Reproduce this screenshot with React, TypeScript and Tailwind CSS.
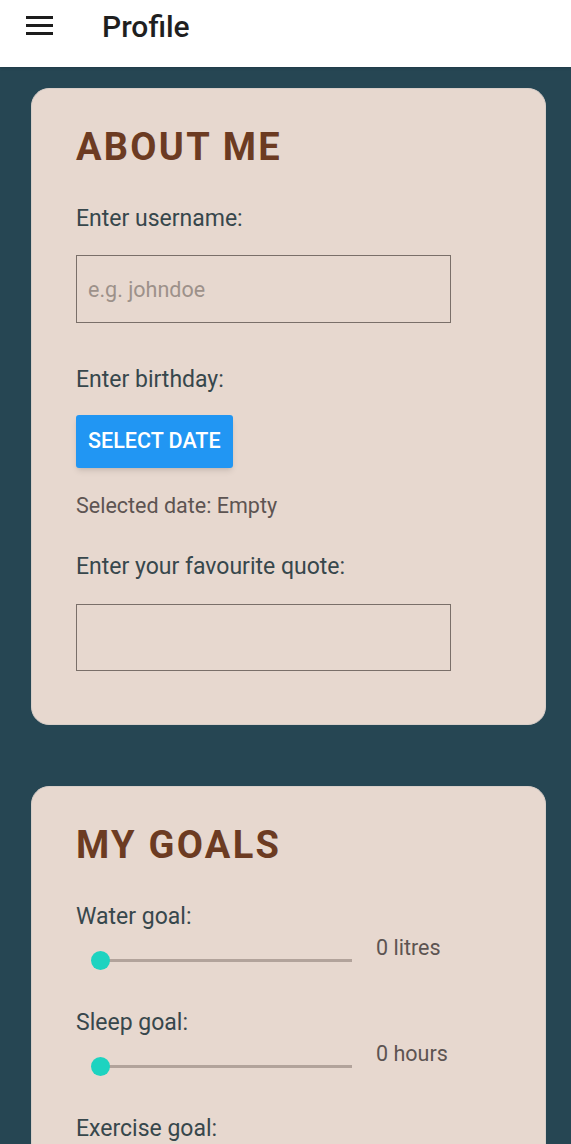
import { useState } from "react";

const GoalSlider = ({ value, unit }: { value: number; unit: string }) => {
  return (
    <div className="flex items-start h-[46px]">
      <div className="relative w-[290px] h-[46px] shrink-0">
        <div className="absolute left-[24px] w-[252px] top-[28px] h-[3px] bg-[#b2a39b]" />
        <div className="absolute left-[15px] top-[20px] w-[19px] h-[19px] rounded-full bg-[#1dd3c0]" />
      </div>
      <span className="ml-[10px] mt-[4px] text-[21.5px] leading-[26px] text-[#5d5452]">
        {value} {unit}
      </span>
    </div>
  );
};

export default function App() {
  const [username, setUsername] = useState("");
  const [quote, setQuote] = useState("");

  return (
    <div className="min-h-screen bg-[#264653] font-['Roboto',sans-serif]">
      <header className="h-[67px] bg-white flex items-start shadow-sm">
        <div className="ml-[26px] mt-[16px] flex flex-col gap-[5px]">
          <span className="block w-[27px] h-[3px] bg-[#1c1c1c]" />
          <span className="block w-[27px] h-[3px] bg-[#1c1c1c]" />
          <span className="block w-[27px] h-[3px] bg-[#1c1c1c]" />
        </div>
        <h1 className="ml-[49px] mt-[9px] text-[30px] leading-[36px] font-medium text-[#1f1f1f]">
          Profile
        </h1>
      </header>

      <main className="pl-[31px] pr-[25px] pt-[21px] flex flex-col gap-[61px]">
        <section className="bg-[#e7d8cf] rounded-[18px] border border-[#d8cec8] px-[44px] pt-[34px] pb-[53px]">
          <h2 className="text-[38px] font-bold tracking-[0.06em] text-[#6c3b22] leading-[48px]">
            ABOUT ME
          </h2>
          <label className="block mt-[34px] text-[23px] leading-[28px] text-[#37474c]">
            Enter username:
          </label>
          <input
            value={username}
            onChange={(e) => setUsername(e.target.value)}
            placeholder="e.g. johndoe"
            className="block mt-[22px] w-[375px] h-[68px] border-[1.5px] border-[#7a6f69] bg-transparent px-[11px] text-[21.5px] text-[#37474c] placeholder:text-[#9d918a] outline-none"
          />
          <label className="block mt-[43px] text-[23px] leading-[28px] text-[#37474c]">
            Enter birthday:
          </label>
          <button className="block mt-[21px] h-[53px] px-[12px] rounded-[3px] bg-[#2196f3] text-white text-[21.5px] font-medium shadow-md">
            SELECT DATE
          </button>
          <p className="mt-[25px] text-[21.5px] leading-[26px] text-[#5d5452]">Selected date: Empty</p>
          <label className="block mt-[34px] text-[23px] leading-[28px] text-[#37474c]">
            Enter your favourite quote:
          </label>
          <input
            value={quote}
            onChange={(e) => setQuote(e.target.value)}
            className="block mt-[23px] w-[375px] h-[67px] border-[1.5px] border-[#7a6f69] bg-transparent px-[11px] text-[21.5px] text-[#37474c] outline-none"
          />
        </section>

        <section className="bg-[#e7d8cf] rounded-[18px] border border-[#d8cec8] px-[44px] pt-[34px] pb-[40px]">
          <h2 className="text-[38px] font-bold tracking-[0.06em] text-[#6c3b22] leading-[48px]">
            MY GOALS
          </h2>
          <label className="block mt-[34px] text-[23px] leading-[28px] text-[#37474c]">Water goal:</label>
          <GoalSlider value={0} unit="litres" />
          <label className="block mt-[32px] text-[23px] leading-[28px] text-[#37474c]">Sleep goal:</label>
          <GoalSlider value={0} unit="hours" />
          <label className="block mt-[32px] text-[23px] leading-[28px] text-[#37474c]">Exercise goal:</label>
          <GoalSlider value={0} unit="minutes" />
        </section>
      </main>
    </div>
  );
}
